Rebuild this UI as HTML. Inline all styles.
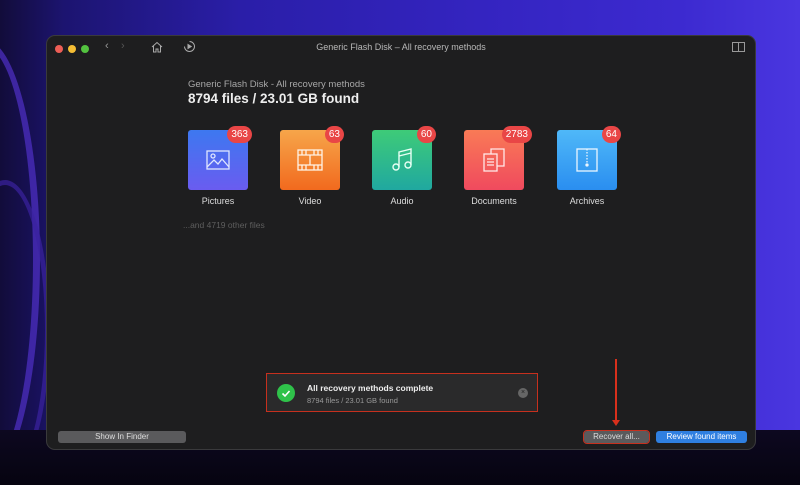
<!DOCTYPE html>
<html style="width:800px;height:485px;overflow:hidden"><head><meta charset="utf-8"><style>
*{margin:0;padding:0;box-sizing:border-box}
body{width:800px;height:485px;overflow:hidden;font-family:"Liberation Sans",sans-serif;position:relative;
background:linear-gradient(90deg,#120c3a 0%,#1c1470 8%,#2a1ea8 30%,#3424c0 60%,#3c2ad0 85%,#4a36e0 100%)}
.bot{position:absolute;left:0;top:430px;width:800px;height:55px;background:linear-gradient(180deg,#0d0820,#060410)}
.swl{position:absolute;left:-70px;top:40px;width:110px;height:440px;border-radius:50%;border:7px solid #5030c8;opacity:.7}
.swl2{position:absolute;left:-40px;top:180px;width:90px;height:300px;border-radius:50%;border:5px solid #3a22a0;opacity:.7}
.win{position:absolute;left:46px;top:35px;width:710px;height:415px;background:#1e1e1f;border-radius:9px;border:1px solid #3a3a3c;overflow:hidden}
.tl{position:absolute;top:9px;width:8px;height:8px;border-radius:50%}
.title{position:absolute;top:6px;left:0;width:100%;text-align:center;font-size:9px;color:#b8b8b8}
.h1{position:absolute;left:141px;top:43px;font-size:9.5px;color:#a8a8a8}
.h2{position:absolute;left:141px;top:55px;font-size:13.5px;font-weight:bold;color:#eee}
.cat{position:absolute;top:94px;width:60px;height:60px;border-radius:3px}
.cat svg{position:absolute;left:15px;top:15px}
.badge{position:absolute;top:-4px;height:17px;border-radius:9px;background:#e94646;color:#fff;font-size:10px;line-height:17px;text-align:center;padding:0 4px}
.lab{position:absolute;top:160px;width:80px;text-align:center;font-size:9px;color:#ddd}
.other{position:absolute;left:136px;top:184px;font-size:8.5px;color:#5e5e5e}
.toast{position:absolute;left:219px;top:337px;width:272px;height:39px;border:1.5px solid #c6301e;background:#2a2a2b}
.btn{position:absolute;top:395px;height:12px;border-radius:3px;font-size:8px;line-height:12px;text-align:center;color:#ddd}
</style></head><body>
<div class="swl"></div><div class="swl2"></div><div class="bot"></div>
<div class="win">
<div class="tl" style="left:8px;background:#ed5e56"></div>
<div class="tl" style="left:21px;background:#f4bd34"></div>
<div class="tl" style="left:34px;background:#53c23f"></div>
<div style="position:absolute;left:58px;top:4px;color:#999;font-size:11px">‹</div>
<div style="position:absolute;left:74px;top:4px;color:#555;font-size:11px">›</div>
<svg style="position:absolute;left:104px;top:5px" width="12" height="12" viewBox="0 0 12 12" fill="none" stroke="#aaa" stroke-width="1"><path d="M1 6L6 1.5 11 6M2.5 5v6h2.5V8h2v3h2.5V5"/></svg>
<svg style="position:absolute;left:136px;top:4px" width="13" height="13" viewBox="0 0 13 13" fill="none" stroke="#aaa" stroke-width="1"><path d="M6.5 1.5a5 5 0 1 1-5 5"/><path d="M5 4.5v4l3.2-2z" fill="#aaa"/></svg>
<div class="title">Generic Flash Disk – All recovery methods</div>
<svg style="position:absolute;left:685px;top:6px" width="13" height="10" viewBox="0 0 13 10" fill="none" stroke="#999"><rect x=".5" y=".5" width="12" height="9"/><path d="M6.5 .5v9"/></svg>
<div class="h1">Generic Flash Disk - All recovery methods</div>
<div class="h2">8794 files / 23.01 GB found</div>

<div class="cat" style="left:141px;background:linear-gradient(180deg,#3d78f0,#6a5cf0)"><svg width="30" height="30" viewBox="0 0 30 30" fill="none" stroke="#dfe6ff" stroke-width="1.3"><rect x="4" y="6" width="22" height="18"/><circle cx="10" cy="11" r="2"/><path d="M4 22l7-7 4 4 4-5 7 8"/></svg><div class="badge" style="right:-4px">363</div></div>
<div class="lab" style="left:131px">Pictures</div>
<div class="cat" style="left:233px;background:linear-gradient(180deg,#f6a64a,#f26a1e)"><svg width="30" height="30" viewBox="0 0 30 30" fill="none" stroke="#fff3e6" stroke-width="1.3"><rect x="3" y="5" width="24" height="20"/><path d="M3 10h24M3 20h24M15 10v10M7 5v5M11 5v5M19 5v5M23 5v5M7 20v5M11 20v5M19 20v5M23 20v5"/></svg><div class="badge" style="right:-4px">63</div></div>
<div class="lab" style="left:223px">Video</div>
<div class="cat" style="left:325px;background:linear-gradient(180deg,#3ecb78,#20a8a0)"><svg width="30" height="30" viewBox="0 0 30 30" fill="none" stroke="#e8fff4" stroke-width="1.4"><circle cx="9" cy="22" r="3"/><circle cx="21" cy="20" r="3"/><path d="M12 22V7l12-3v16M12 11l12-3"/></svg><div class="badge" style="right:-4px">60</div></div>
<div class="lab" style="left:315px">Audio</div>
<div class="cat" style="left:417px;background:linear-gradient(180deg,#f97a56,#f04a5e)"><svg width="30" height="30" viewBox="0 0 30 30" fill="none" stroke="#ffe8e8" stroke-width="1.3"><rect x="5" y="9" width="13" height="17"/><path d="M12 9V4h13v17h-7M8 14h7M8 17h7M8 20h7"/></svg><div class="badge" style="right:-8px">2783</div></div>
<div class="lab" style="left:407px">Documents</div>
<div class="cat" style="left:510px;background:linear-gradient(180deg,#4fb8f8,#2a8ef0)"><svg width="30" height="30" viewBox="0 0 30 30" fill="none" stroke="#eaf6ff" stroke-width="1.3"><rect x="5" y="4" width="20" height="22"/><path d="M15 4v14" stroke-dasharray="1.5 1.5"/><circle cx="15" cy="20" r="1" fill="#eaf6ff"/></svg><div class="badge" style="right:-4px">64</div></div>
<div class="lab" style="left:500px">Archives</div>
<div class="other">...and 4719 other files</div>

<div class="toast">
<div style="position:absolute;left:10px;top:10px;width:18px;height:18px;border-radius:50%;background:#2fc24a"><svg width="18" height="18" viewBox="0 0 18 18"><path d="M5.5 9.5l2.5 2.5 4.5-5" fill="none" stroke="#fff" stroke-width="1.6"/></svg></div>
<div style="position:absolute;left:40px;top:9px;font-size:8.5px;font-weight:bold;color:#eee">All recovery methods complete</div>
<div style="position:absolute;left:40px;top:22px;font-size:7.5px;color:#999">8794 files / 23.01 GB found</div>
<div style="position:absolute;left:251px;top:14px;width:10px;height:10px;border-radius:50%;background:#666;color:#222;font-size:7px;line-height:10px;text-align:center">×</div>
</div>
<div style="position:absolute;left:568px;top:323px;width:1.5px;height:62px;background:#d8301c"></div>
<div style="position:absolute;left:565px;top:384px;width:0;height:0;border-left:4px solid transparent;border-right:4px solid transparent;border-top:6px solid #d8301c"></div>
<div class="btn" style="left:11px;width:128px;background:#5a5a5c">Show In Finder</div>
<div class="btn" style="left:537px;width:65px;background:#5a5a5c;outline:1.5px solid #c6301e">Recover all...</div>
<div class="btn" style="left:609px;width:91px;background:#2f7fe0;color:#fff">Review found items</div>
</div>
</body></html>
